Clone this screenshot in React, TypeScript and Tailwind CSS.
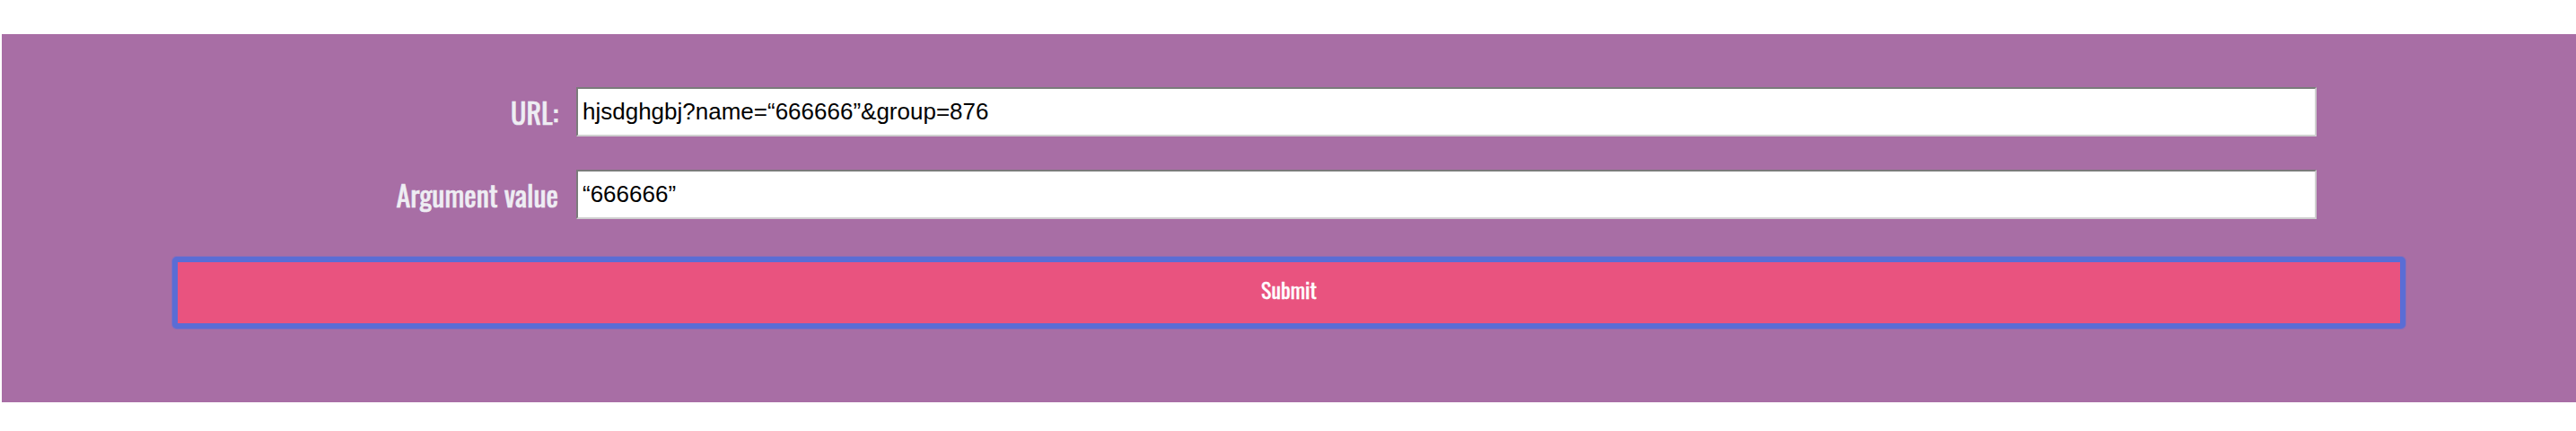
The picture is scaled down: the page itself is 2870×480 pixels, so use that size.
import React from 'react';

const labelFont = '"Oswald", "Liberation Sans Narrow", "DejaVu Sans Condensed", "Roboto Condensed", sans-serif';

function Field({ label, value }: { label: string; value: string }) {
  return (
    <div className="flex items-center">
      <label
        className="w-[620px] text-right text-[32px] font-normal leading-none text-[#eeedf3] [-webkit-text-stroke:0.6px_#eeedf3]"
        style={{ fontFamily: labelFont }}
      >
        {label}
      </label>
      <input
        readOnly
        value={value}
        className="ml-[20px] h-[55px] w-[1939px] border-2 border-[#cfcfcf] bg-white pl-[5px] text-[26px] text-black outline-none [border-style:inset] font-['Liberation_Sans',Arial,sans-serif]"
      />
    </div>
  );
}

export default function App() {
  return (
    <div className="min-h-[480px] bg-white pt-[38px] pl-[2px]">
      <form className="h-[410px] bg-[#a86ea5] pt-[59px]" onSubmit={(e) => e.preventDefault()}>
        <Field label="URL:" value={'hjsdghgbj?name=\u201c666666\u201d&group=876'} />
        <div className="mt-[37px]">
          <Field label="Argument value" value={'\u201c666666\u201d'} />
        </div>
        <button
          type="submit"
          className="mx-[190px] mt-[42px] block h-[80px] w-[2488px] rounded-[5px] border-[6px] border-[#5a6dd5] bg-[#e9537f] pb-[9px] text-[24px] font-normal text-white shadow-[0_0_0_1px_rgba(100,110,210,0.45)] [-webkit-text-stroke:0.4px_white]"
          style={{ fontFamily: labelFont }}
        >
          Submit
        </button>
      </form>
    </div>
  );
}
